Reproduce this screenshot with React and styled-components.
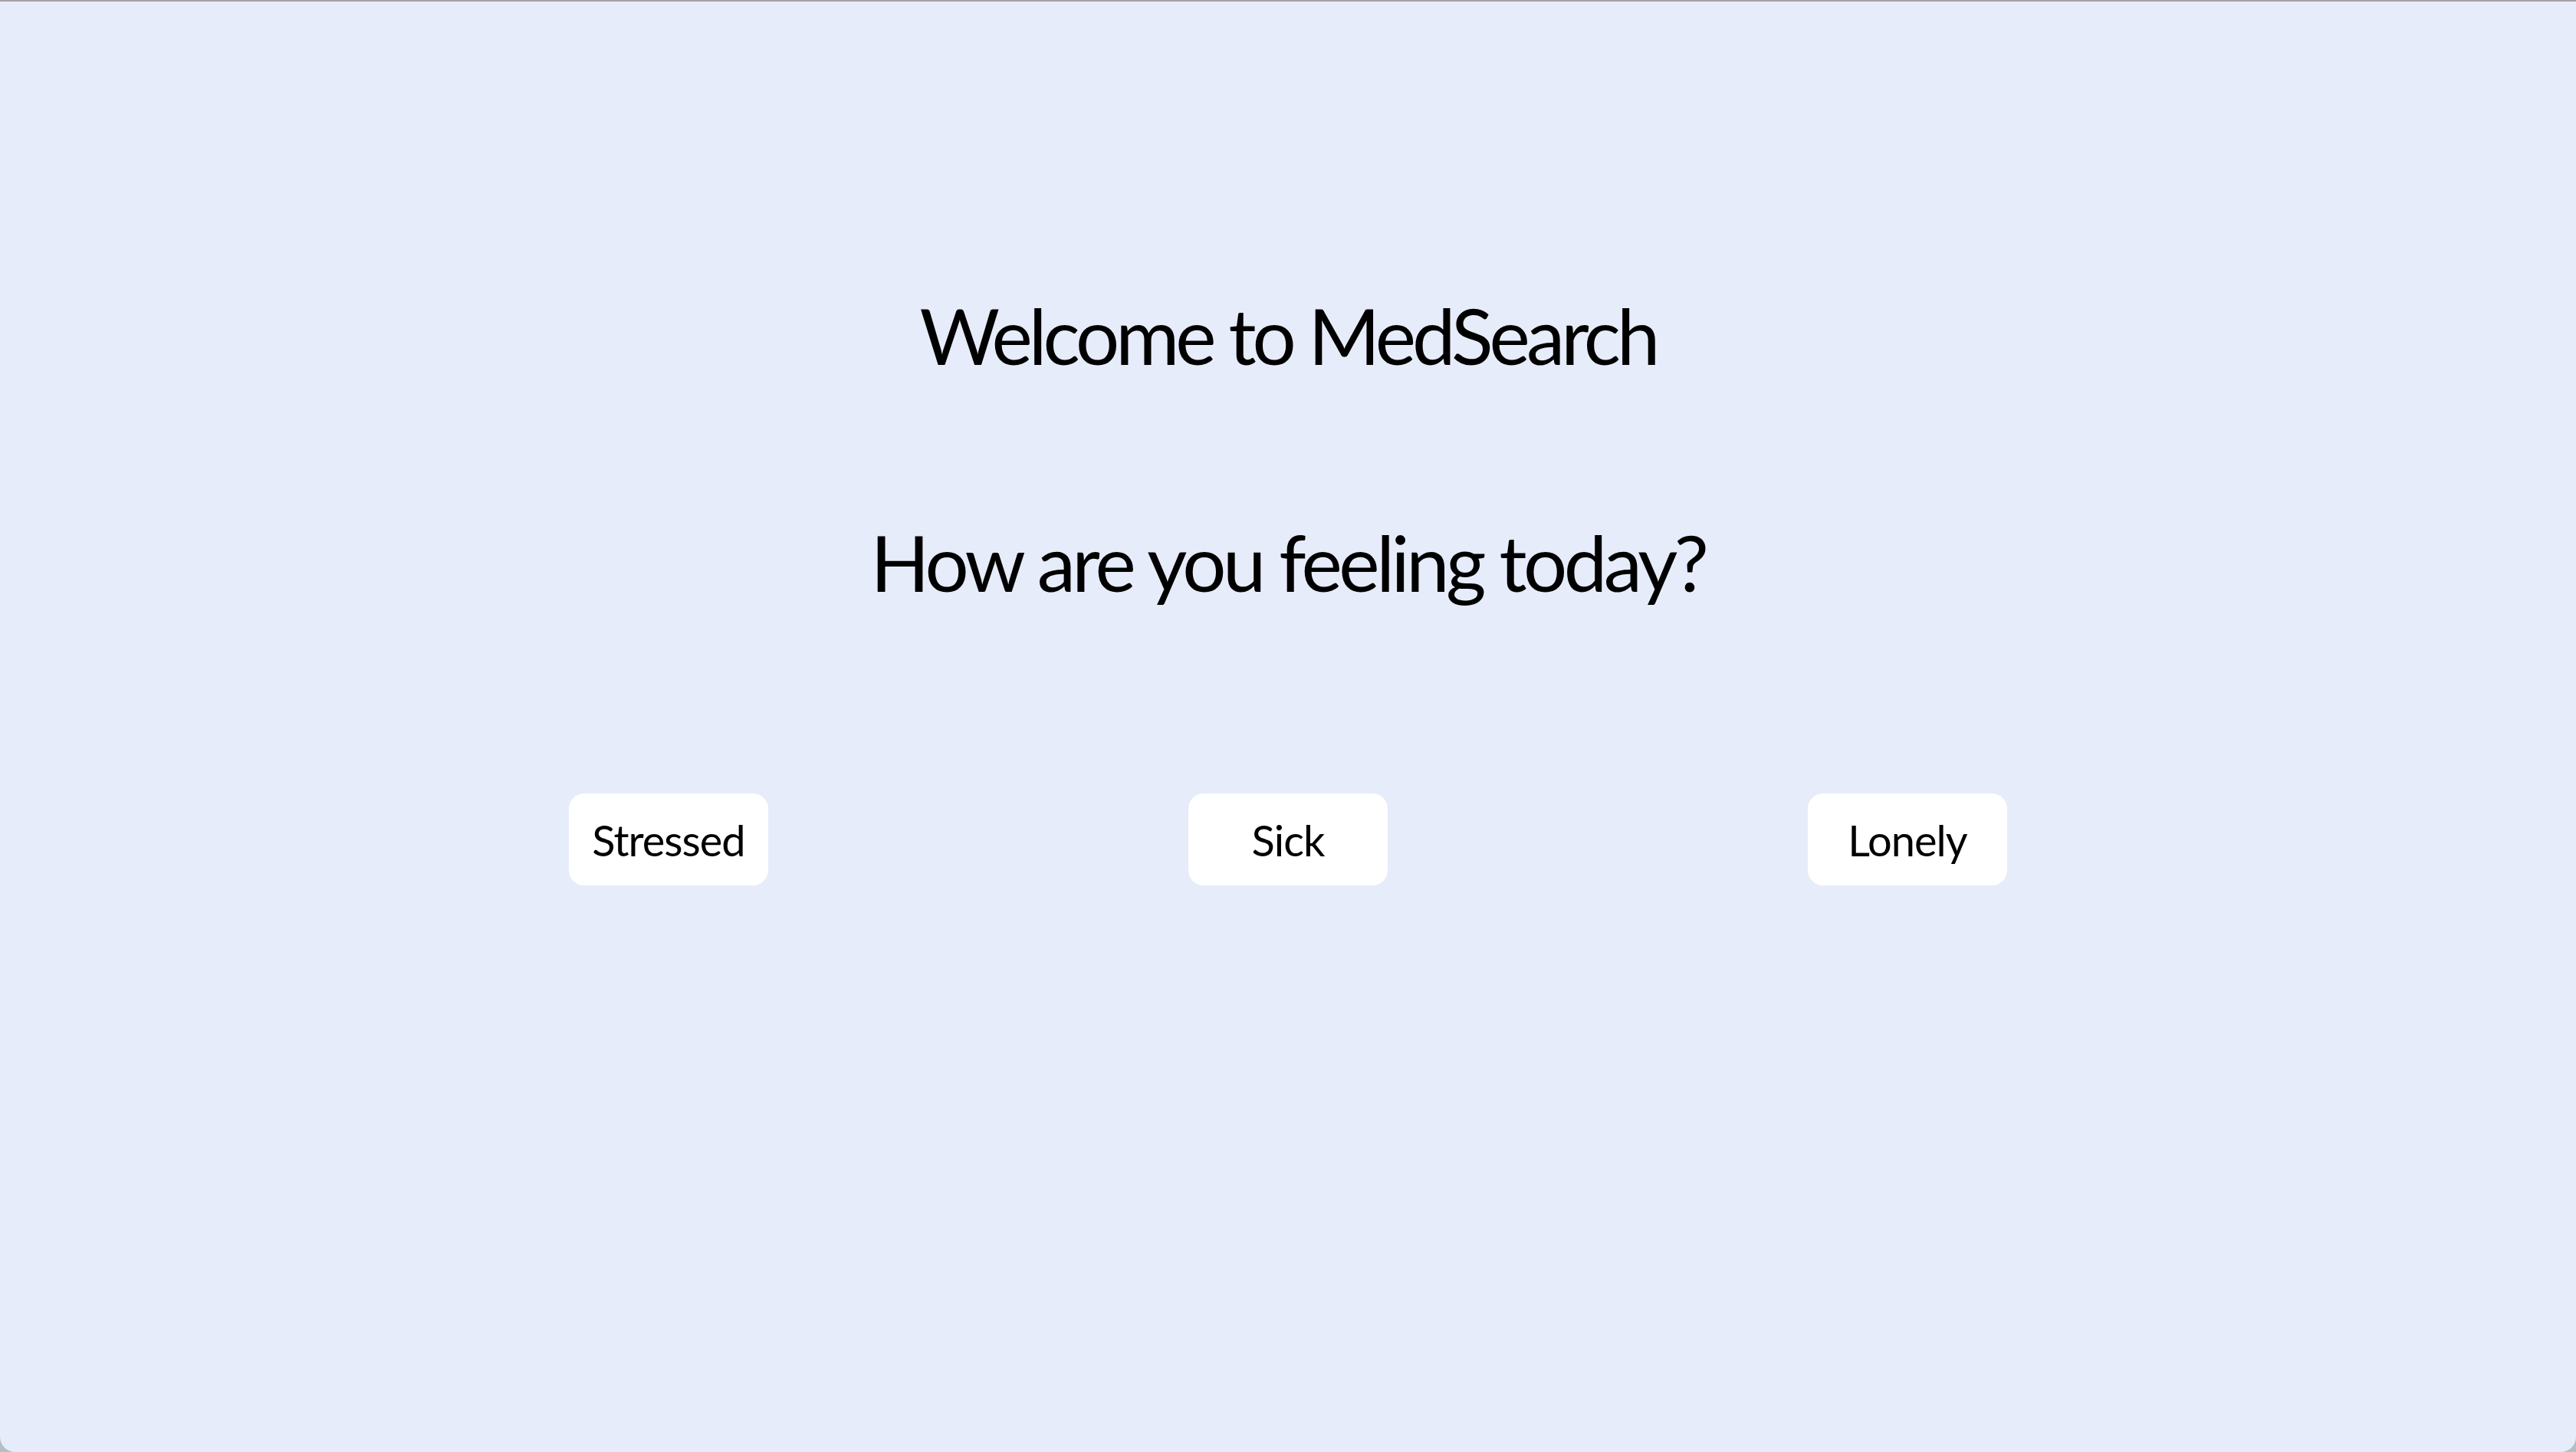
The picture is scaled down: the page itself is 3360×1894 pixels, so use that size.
import styled, { createGlobalStyle } from 'styled-components';

const GlobalStyle = createGlobalStyle`
  html, body {
    margin: 0;
    padding: 0;
    background: #b3bfc3;
  }
  #root {
    min-height: 100vh;
  }
`;

const moods = ['Stressed', 'Sick', 'Lonely'];

function App() {
    return (
        <>
            <GlobalStyle />
            <Frame>
                <Title>Welcome to MedSearch</Title>
                <Question>How are you feeling today?</Question>
                <MoodRow>
                    {moods.map((mood) => (
                        <MoodCell key={mood}>
                            <MoodButton type="button">{mood}</MoodButton>
                        </MoodCell>
                    ))}
                </MoodRow>
            </Frame>
        </>
    );
}

export default App;

const Frame = styled.main`
    box-sizing: border-box;
    min-height: 100vh;
    display: flex;
    flex-direction: column;
    align-items: center;
    padding-top: 375px;
    background: #e6ecfa;
    border-top: 2px solid #a99fa6;
    border-radius: 0 0 20px 20px;
    font-family: 'Lato', 'Open Sans', sans-serif;
    color: #000000;
`;

const Title = styled.h1`
    margin: 0;
    font-weight: 400;
    font-size: 101px;
    line-height: 1.2;
    letter-spacing: -5px;
`;

const Question = styled.h2`
    margin: 175px 0 0;
    font-weight: 400;
    font-size: 101px;
    line-height: 1.2;
    letter-spacing: -4.5px;
`;

const MoodRow = styled.div`
    display: grid;
    grid-template-columns: repeat(3, 808px);
    margin-top: 241px;
`;

const MoodCell = styled.div`
    display: flex;
    justify-content: center;
`;

const MoodButton = styled.button`
    width: 260px;
    height: 120px;
    display: flex;
    align-items: center;
    justify-content: center;
    padding: 0;
    background: #ffffff;
    border: none;
    border-radius: 20px;
    font-family: 'Lato', 'Open Sans', sans-serif;
    font-size: 56px;
    font-weight: 400;
    letter-spacing: -1px;
    color: #000000;
    cursor: pointer;
`;
